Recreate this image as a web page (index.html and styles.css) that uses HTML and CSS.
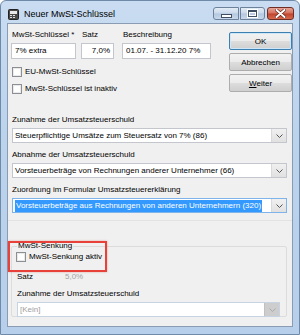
FILE: index.html
```html
<!DOCTYPE html>
<html lang="de">
<head>
    <meta charset="utf-8">
    <meta name="viewport" content="width=device-width, initial-scale=1">
    <link rel="stylesheet" href="styles.css">
    <title>Neuer MwSt-Schlüssel</title>
</head>
<body>
<div class="window">
    <div class="titlebar">
        <svg class="appIcon" width="11" height="11" viewBox="0 0 11 11">
            <rect x="0.5" y="0.5" width="10" height="10" rx="1" fill="#4a4a4a" stroke="#222"/>
            <rect x="2" y="2" width="7" height="3" fill="#e8e8e8"/>
            <rect x="2" y="6" width="2" height="1" fill="#ddd"/>
            <rect x="5" y="6" width="2" height="1" fill="#ddd"/>
            <rect x="2" y="8" width="2" height="1" fill="#ddd"/>
            <rect x="5" y="8" width="2" height="1" fill="#ddd"/>
        </svg>
        <span class="title">Neuer MwSt-Schlüssel</span>
        <div class="capButtons">
            <span class="cap capMin"><i></i></span>
            <span class="cap capMax"><i></i></span>
            <span class="cap capClose">
                <svg width="11" height="9" viewBox="0 0 11 9">
                    <path d="M1.5 1 L9.5 8 M9.5 1 L1.5 8" stroke="#5a1b12" stroke-width="3.2" stroke-linecap="round"/>
                    <path d="M1.5 1 L9.5 8 M9.5 1 L1.5 8" stroke="#fff" stroke-width="2" stroke-linecap="round"/>
                </svg>
            </span>
        </div>
    </div>

    <div class="client">             <!-- dialog body -->
        <div class="head">
            <div class="fields">
                <div class="fieldRow">
                    <div class="field fKey">
                        <span class="lbl">MwSt-Schlüssel *</span>
                        <span class="edit">7% extra</span>
                    </div>
                    <div class="field fRate">
                        <span class="lbl">Satz</span>
                        <span class="edit right">7,0%</span>
                    </div>
                    <div class="field fDesc">
                        <span class="lbl">Beschreibung</span>
                        <span class="edit">01.07. - 31.12.20 7%</span>
                    </div>
                </div>
                <div class="check first"><span class="box"></span>EU-MwSt-Schlüssel</div>
                <div class="check"><span class="box"></span>MwSt-Schlüssel ist inaktiv</div>
            </div>
            <div class="buttons">
                <span class="btn btnDefault">OK</span>
                <span class="btn">Abbrechen</span>
                <span class="btn"><u>W</u>eiter</span>
            </div>
        </div>

        <div class="combos">
            <div class="caption">Zunahme der Umsatzsteuerschuld</div>
            <div class="combo">
                <span class="value">Steuerpflichtige Umsätze zum Steuersatz von 7% (86)</span>
                <span class="drop"><svg width="7" height="4" viewBox="0 0 7 4"><path d="M0.5 0.5 L3.5 3.5 L6.5 0.5" fill="none" stroke="#555"/></svg></span>
            </div>
            <div class="caption">Abnahme der Umsatzsteuerschuld</div>
            <div class="combo">
                <span class="value">Vorsteuerbeträge von Rechnungen anderer Unternehmer (66)</span>
                <span class="drop"><svg width="7" height="4" viewBox="0 0 7 4"><path d="M0.5 0.5 L3.5 3.5 L6.5 0.5" fill="none" stroke="#555"/></svg></span>
            </div>
            <div class="caption">Zuordnung im Formular Umsatzsteuererklärung</div>
            <div class="combo focused">
                <span class="value"><span class="selected">Vorsteuerbeträge aus Rechnungen von anderen Unternehmern (320)</span></span>
                <span class="drop"><svg width="7" height="4" viewBox="0 0 7 4"><path d="M0.5 0.5 L3.5 3.5 L6.5 0.5" fill="none" stroke="#555"/></svg></span>
            </div>
        </div>

        <div class="lower">
            <fieldset class="group">
                <legend>MwSt-Senkung</legend>
                <div class="check"><span class="box"></span>MwSt-Senkung aktiv</div>
                <div class="rateRow"><span class="rateLbl">Satz</span><span class="muted">5,0%</span></div>
                <div class="caption">Zunahme der Umsatzsteuerschuld</div>
                <div class="combo disabled">
                    <span class="value">[Kein]</span>
                    <span class="drop"><svg width="7" height="4" viewBox="0 0 7 4"><path d="M0.5 0.5 L3.5 3.5 L6.5 0.5" fill="none" stroke="#aaa"/></svg></span>
                </div>
            </fieldset>
            <div class="marker"></div>
        </div>
    </div>
</div>
</body>
</html>
```

FILE: styles.css
```css
html, body {
    margin: 0;
    padding: 0;
    background: #fff;
}
body {
    font-family: "Liberation Sans", Arial, sans-serif;
    font-size: 8px;
    color: #000;
}

.window {
    width: 300px;
    height: 335px;
    box-sizing: border-box;
    background: linear-gradient(to bottom, #c9dcf1 0%, #bcd3ec 40%, #b7cfea 100%);
    border: 1px solid #6f8aa8;
    border-radius: 6px 6px 0 0;
    display: flex;
    flex-direction: column;
}

/* title bar */
.titlebar {
    height: 22px;
    display: flex;
    align-items: center;
    padding: 0 0 0 7px;
}
.appIcon {
    margin-top: 4px;
}
.title {
    margin: 4px 0 0 5px;
    font-size: 9px;
    color: #000;
    flex: 1;
}
.capButtons {
    display: flex;
    align-self: flex-start;
    margin: 6px 5px 0 0;
}
.cap {
    height: 13px;
    box-sizing: border-box;
    display: flex;
    align-items: center;
    justify-content: center;
    border: 1px solid #6d819b;
    background: linear-gradient(to bottom, #e3ecf6 0%, #c9d8ea 48%, #b4c7df 52%, #c8d8ec 100%);
}
.capMin {
    width: 26px;
    border-radius: 3px 0 0 3px;
    margin-right: 1px;
}
.capMax {
    width: 25px;
    border-radius: 0 3px 3px 0;
    margin-right: 2px;
}
.capClose {
    width: 27px;
    border-radius: 3px;
    border-color: #6f2d24;
    background: linear-gradient(to bottom, #e8a597 0%, #d46f5c 48%, #c0432d 52%, #d66a4e 100%);
}
.capMin i {
    display: block;
    width: 9px;
    height: 2px;
    margin-top: 4px;
    background: #fff;
    border: 1px solid #3f4f63;
}
.capMax i {
    display: block;
    width: 7px;
    height: 4px;
    background: transparent;
    border: 1px solid #3f4f63;
    border-top-width: 2px;
    box-shadow: inset 0 0 0 1px #fff, 0 0 0 1px #fff;
}

/* client area */
.client {
    flex: 1;
    margin: 0 6px 7px 6px;
    background: #f0f0f0;
    border: 1px solid #8a9cb3;
    display: flex;
    flex-direction: column;
}

.head {
    display: flex;
    padding: 6px 0 0 3px;
}
.fields {
    width: 208px;
}
.fieldRow {
    display: flex;
}
.field {
    display: flex;
    flex-direction: column;
}
.fKey { width: 65px; margin-right: 5px; }
.fRate { width: 33px; margin-right: 8px; }
.fDesc { width: 89px; }
.lbl {
    height: 10px;
    line-height: 10px;
    padding-left: 1px;
    margin-bottom: 3px;
}
.edit {
    height: 16px;
    box-sizing: border-box;
    line-height: 14px;
    padding: 0 3px;
    background: #fff;
    border: 1px solid #c3c7cd;
    white-space: nowrap;
    overflow: hidden;
}
.right { text-align: right; }

.check {
    display: flex;
    align-items: center;
    height: 10px;
    line-height: 10px;
    margin: 7px 0 0 1px;
}
.check.first { margin-top: 8px; }
.box {
    width: 10px;
    height: 10px;
    box-sizing: border-box;
    border: 1px solid #8c8f94;
    background: #fff;
    margin-right: 3px;
    box-shadow: inset 0 0 0 1px #e9e9e9;
}

.buttons {
    display: flex;
    flex-direction: column;
    margin: 2px 0 0 10px;
}
.btn {
    width: 63px;
    height: 18px;
    box-sizing: border-box;
    margin-bottom: 3px;
    display: flex;
    align-items: center;
    justify-content: center;
    border: 1px solid #adadad;
    border-radius: 2px;
    background: linear-gradient(to bottom, #f2f2f2 0%, #ebebeb 50%, #dddddd 51%, #cfcfcf 100%);
}
.btnDefault {
    border-color: #3c7fb1;
    box-shadow: inset 0 0 0 1px #cfe6f6;
}

/* dropdown lists */
.combos {
    padding: 20px 5px 0 4px;
    border-bottom: 1px solid #e2e2e2;
    padding-bottom: 7px;
}
.caption {
    height: 10px;
    line-height: 10px;
    margin-bottom: 3px;
}
.combo {
    height: 15px;
    box-sizing: border-box;
    display: flex;
    background: #fff;
    border: 1px solid #c3c7cd;
    margin-bottom: 7px;
}
.combos .combo:last-child { margin-bottom: 0; }
.value {
    flex: 1;
    line-height: 13px;
    padding-left: 2px;
    white-space: nowrap;
    overflow: hidden;
}
.selected {
    display: inline-block;
    background: #3399ff;
    color: #fff;
    padding: 0 1px;
    line-height: 12px;
    margin-top: 0;
}
.focused {
    border-color: #7eb4ea;
}
.drop {
    width: 14px;
    display: flex;
    align-items: center;
    justify-content: center;
    background: linear-gradient(to bottom, #f0f0f0, #e1e1e1);
    border-left: 1px solid #d9d9d9;
}

/* lower group */
.lower {
    position: relative;
    flex: 1;
    padding: 20px 5px 0 3px;
}
.group {
    margin: 0;
    padding: 0 6px 2px 5px;
    border: 1px solid #dcdcdc;
    border-radius: 2px;
    height: 76px;
    box-sizing: border-box;
}
.group legend {
    padding: 0 1px;
    margin-left: 0;
    line-height: 10px;
}
.group .check { margin: 1px 0 0 -1px; }
.rateRow {
    display: flex;
    height: 10px;
    line-height: 10px;
    margin: 10px 0 7px 0;
}
.rateLbl { width: 48px; }
.muted { color: #a3a3a3; }
.combo.disabled {
    margin-bottom: 0;
    border-color: #c6d3e2;
}
.combo.disabled .value { color: #a0a0a0; }
.combo.disabled .drop {
    background: #cdcdcd;
    border-left-color: #c0c0c0;
}

.marker {
    position: absolute;
    left: 0;
    top: 20px;
    width: 99px;
    height: 31px;
    box-sizing: border-box;
    border: 2px solid #e8413a;
    box-shadow: 0 0 2px rgba(200, 40, 30, 0.35);
}
```
